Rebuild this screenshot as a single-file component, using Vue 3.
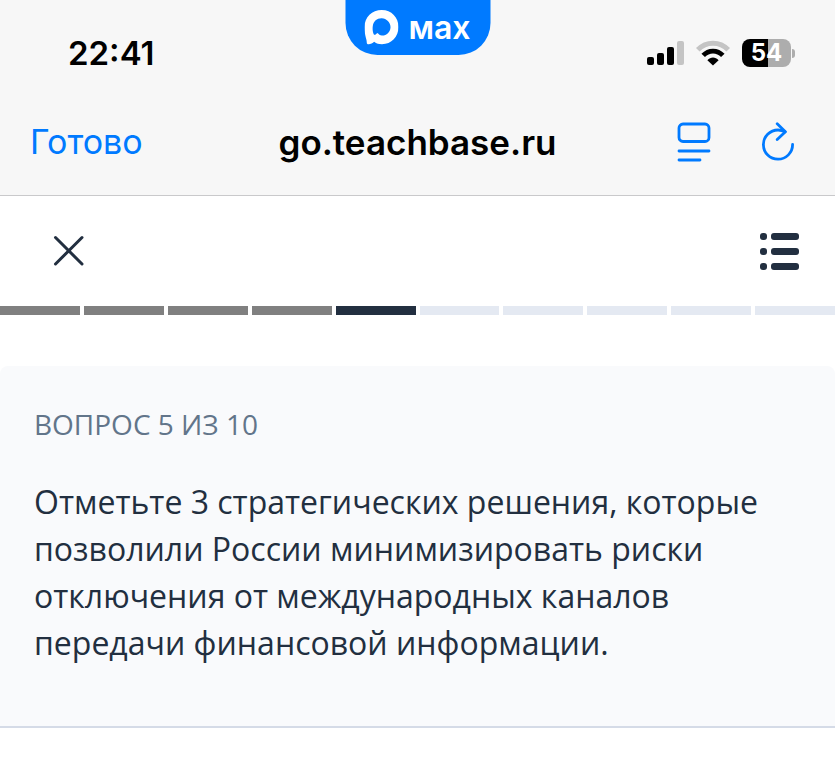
<script setup>
import { computed, ref } from 'vue'

const total = 10
const current = ref(5)
const battery = 54

/** Состояние каждого сегмента полосы прогресса */
const segments = computed(() =>
  Array.from({ length: total }, (_, i) => {
    const number = i + 1
    if (number < current.value) return 'done'
    return number === current.value ? 'current' : 'next'
  }),
)
</script>

<template>
  <div class="screen">
    <header class="browser">
      <div class="status">
        <time class="status__time">22:41</time>
        <div class="status__icons">
          <svg class="status__signal" viewBox="0 0 37 26" aria-hidden="true">
            <rect x="0" y="17" width="7" height="8" rx="2" />
            <rect x="10" y="13" width="7" height="12" rx="2" />
            <rect x="20" y="7" width="7" height="18" rx="2" />
            <rect x="30" y="1" width="7" height="24" rx="2" fill="#c4c4c4" />
          </svg>
          <svg class="status__wifi" viewBox="0 0 34 26" aria-hidden="true">
            <path d="M1.8 9.8C10.2 1 23.8 1 32.2 9.8" fill="none" stroke="#c4c4c4" stroke-width="5" />
            <path d="M7.2 15.4C12.6 9.6 21.4 9.6 26.8 15.4" fill="none" stroke="#000" stroke-width="4.8" />
            <path d="M11.4 20.2C14.6 16.6 19.4 16.6 22.6 20.2L17 25.6Z" />
          </svg>
          <span class="battery">
            <span
              class="battery__body"
              :style="{ '--level': battery + '%' }"
            >{{ battery }}</span>
            <span class="battery__tip" />
          </span>
        </div>
        <div class="badge">
          <svg class="badge__logo" viewBox="0 0 34 35" aria-hidden="true">
            <path
              fill="#fff"
              fill-rule="evenodd"
              d="M17.2 0C27 0 34 7.4 34 17C34 26.8 26.9 34.2 17.5 34.2C14 34.2 12.3 33.6 9.6 31.8C7.8 33.8 2.6 35.4 2.3 33C2.3 31 1.9 29.5 1.3 27.4C.6 24.7 0 21.6 0 17C0 7.2 7.6 0 17.2 0ZM17.3 8.3C12.6 8.1 9 11.2 8.3 16C7.7 19.8 8.7 24.5 10 24.8C10.6 25 12 23.8 12.9 23C14.3 24 15.4 25.6 17.4 25.6C22 25.8 25.7 22.1 26 17.4C26.2 12.7 22.1 8.6 17.3 8.3Z"
            />
          </svg>
          <span class="badge__name">мах</span>
        </div>
      </div>

      <nav class="toolbar">
        <button type="button" class="toolbar__done">Готово</button>
        <span class="toolbar__host">go.teachbase.ru</span>
        <div class="toolbar__actions">
          <button type="button" class="icon-button" aria-label="Меню страницы">
            <svg width="34" height="40" viewBox="0 0 34 40" fill="none" stroke="currentColor" stroke-width="2.8" stroke-linecap="round">
              <rect x="2" y="2" width="30" height="17.5" rx="4" />
              <path d="M2 29H32M2 38H23" />
            </svg>
          </button>
          <button type="button" class="icon-button" aria-label="Обновить">
            <svg width="34" height="40" viewBox="0 0 34 40" fill="none" stroke="currentColor" stroke-width="2.8" stroke-linecap="round" stroke-linejoin="round">
              <path d="M31.6 22.5A14.6 14.6 0 1 1 17 8C19.8 8 22 8.7 24 9.8" />
              <path d="M16.2 1.8L24.4 9.8L16.2 17.6" />
            </svg>
          </button>
        </div>
      </nav>
    </header>

    <main class="quiz">
      <div class="quiz__bar">
        <button type="button" class="icon-button" aria-label="Закрыть">
          <svg width="32" height="32" viewBox="0 0 32 32" fill="none" stroke="currentColor" stroke-width="3" stroke-linecap="round">
            <path d="M3.5 2.5L30 29M30 2.5L3.5 29" />
          </svg>
        </button>
        <button type="button" class="icon-button" aria-label="Список вопросов">
          <svg width="40" height="38" viewBox="0 0 40 38" fill="currentColor">
            <rect x="0" y="1" width="7" height="7" rx="3" />
            <rect x="11" y="1" width="28" height="7" rx="3" />
            <rect x="0" y="16" width="7" height="7" rx="3" />
            <rect x="11" y="16" width="28" height="7" rx="3" />
            <rect x="0" y="31" width="7" height="7" rx="3" />
            <rect x="11" y="31" width="28" height="7" rx="3" />
          </svg>
        </button>
      </div>

      <div
        class="progress"
        role="progressbar"
        aria-label="Прогресс"
        aria-valuemin="1"
        :aria-valuemax="total"
        :aria-valuenow="current"
      >
        <span
          v-for="(state, i) in segments"
          :key="i"
          class="progress__item"
          :class="`progress__item--${state}`"
        />
      </div>

      <section class="question">
        <p class="question__counter">ВОПРОС {{ current }} ИЗ {{ total }}</p>
        <h1 class="question__text">
          Отметьте 3 стратегических решения, которые позволили России
          минимизировать риски отключения от международных каналов передачи
          финансовой информации.
        </h1>
      </section>
    </main>
  </div>
</template>

<style>
body {
  margin: 0;
  background: #fff;
}
</style>

<style scoped>
.screen {
  color: #222f40;
  font-family: 'Open Sans', sans-serif;
}

.browser {
  border-bottom: 1px solid #c9c9cb;
  background: #f7f7f7;
  color: #000;
  font-family: Inter, sans-serif;
}

.status {
  position: relative;
  display: flex;
  align-items: center;
  justify-content: space-between;
  height: 106px;
  padding: 0 40px 0 68px;
  box-sizing: border-box;
}

.status__time {
  font-size: 33px;
  font-weight: 600;
  line-height: 40px;
}

.status__icons {
  display: flex;
  align-items: center;
  gap: 12px;
}

.status__signal {
  width: 37px;
  height: 26px;
}

.status__wifi {
  width: 34px;
  height: 26px;
}

.battery {
  display: flex;
  align-items: center;
  gap: 1px;
}

.battery__body {
  width: 49px;
  border-radius: 8px;
  background: linear-gradient(to right, #000 var(--level), #adadad var(--level));
  color: #fff;
  font-size: 24px;
  font-weight: 700;
  line-height: 28px;
  text-align: center;
}

.battery__tip {
  width: 3px;
  height: 9px;
  border-radius: 0 3px 3px 0;
  background: #adadad;
}

.badge {
  position: absolute;
  top: 0;
  left: 50%;
  display: flex;
  align-items: center;
  justify-content: center;
  gap: 10px;
  width: 145px;
  height: 55px;
  border-radius: 0 0 32px 32px;
  background: #007aff;
  color: #fff;
  transform: translateX(-50%);
}

.badge__logo {
  width: 34px;
  height: 35px;
}

.badge__name {
  font-size: 32px;
  font-weight: 600;
  line-height: 40px;
}

.toolbar {
  display: grid;
  grid-template-columns: 1fr auto 1fr;
  align-items: center;
  height: 89px;
  padding: 0 40px 18px 30px;
  box-sizing: border-box;
}

.toolbar__done {
  justify-self: start;
  padding: 0;
  border: 0;
  background: none;
  color: #007aff;
  font: 400 34px/44px Inter, sans-serif;
  cursor: pointer;
}

.toolbar__host {
  margin-left: 10px;
  font-size: 35px;
  font-weight: 600;
  line-height: 44px;
}

.toolbar__actions {
  display: flex;
  justify-content: flex-end;
  gap: 50px;
  color: #007aff;
}

.icon-button {
  display: flex;
  padding: 0;
  border: 0;
  background: none;
  color: inherit;
  cursor: pointer;
}

.quiz__bar {
  display: flex;
  align-items: center;
  justify-content: space-between;
  height: 110px;
  padding: 0 35px 0 52px;
  box-sizing: border-box;
}

.progress {
  display: flex;
  gap: 4px;
}

.progress__item {
  flex: 1;
  height: 9px;
  background: #e4e9f2;
}

.progress__item--done {
  background: #808080;
}

.progress__item--current {
  background: #222f40;
}

.question {
  margin-top: 51px;
  padding: 38px 34px 60px;
  border-bottom: 2px solid #d5dbe7;
  border-radius: 8px 8px 0 0;
  background: #f9fafc;
}

.question__counter {
  margin: 0 0 34px;
  color: #62758a;
  font-size: 28px;
  line-height: 40px;
}

.question__text {
  margin: 0;
  font-size: 32px;
  font-weight: 400;
  line-height: 47px;
}
</style>
